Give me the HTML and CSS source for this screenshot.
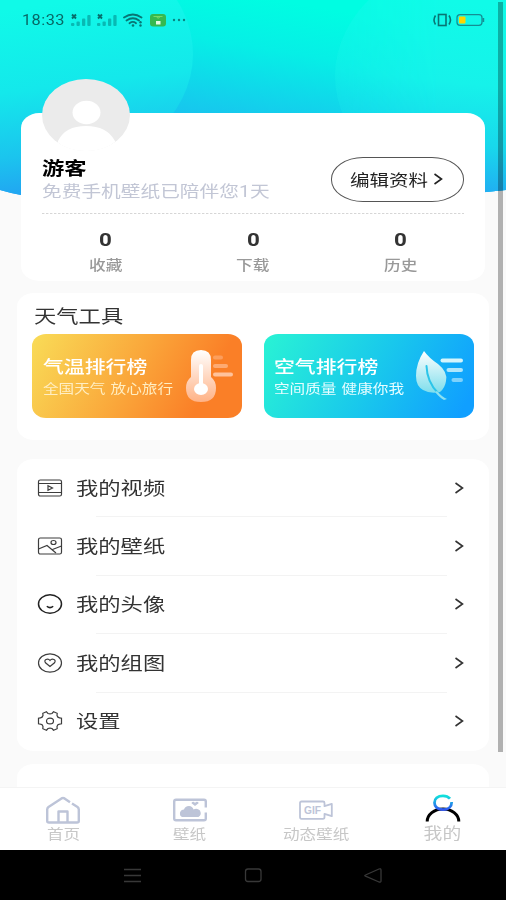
FILE: index.html
```html
<!DOCTYPE html>
<html lang="zh-CN">
<head>
<meta charset="utf-8">
<title>我的</title>
<link rel="stylesheet" href="styles.css">
</head>
<body>
<div class="phone">
  <svg class="sky" viewBox="0 0 506 200" width="506" height="200">
    <defs>
      <linearGradient id="base" gradientUnits="userSpaceOnUse" x1="275" y1="0" x2="243" y2="196">
        <stop offset="0" stop-color="#00fde2"/><stop offset=".25" stop-color="#06efe6"/><stop offset=".6" stop-color="#16c9ed"/><stop offset="1" stop-color="#23a2f4"/>
      </linearGradient>
      <linearGradient id="bubble" gradientUnits="userSpaceOnUse" x1="80" y1="0" x2="104" y2="196">
        <stop offset="0" stop-color="#10fae8"/><stop offset=".42" stop-color="#14e8eb"/><stop offset=".75" stop-color="#1bc4ee"/><stop offset="1" stop-color="#239cf3"/>
      </linearGradient>
      <linearGradient id="bubble2" gradientUnits="userSpaceOnUse" x1="440" y1="0" x2="420" y2="200">
        <stop offset="0" stop-color="#10fbe8"/><stop offset=".4" stop-color="#16f2ea"/><stop offset=".7" stop-color="#18d8ec"/><stop offset="1" stop-color="#23a2f4"/>
      </linearGradient>
      <linearGradient id="edge" gradientUnits="userSpaceOnUse" x1="335" y1="0" x2="440" y2="0">
        <stop offset="0" stop-color="#fff" stop-opacity=".45"/><stop offset="1" stop-color="#fff"/>
      </linearGradient>
      <mask id="soft"><rect width="506" height="200" fill="url(#edge)"/></mask>
      <clipPath id="dome"><path d="M0 0H506V190Q253 216 485 194.500V200H21V195Q10 193 0 190Z"/></clipPath>
    </defs>
    <g clip-path="url(#dome)">
      <rect width="506" height="200" fill="url(#base)"/>
      <ellipse cx="50" cy="54" rx="143" ry="117" fill="url(#bubble)"/>
      <rect width="40" height="200" fill="url(#bubble)"/>
      <ellipse cx="476" cy="76" rx="141" ry="117" fill="url(#bubble2)" mask="url(#soft)"/>
      <rect x="470" width="36" height="200" fill="url(#bubble2)"/>
    </g>
  </svg>

  <header class="status">
    <span class="clock">18:33</span>
    <svg class="signals" width="120" height="16" viewBox="0 0 120 16">
      <g id="sig">
        <path d="M2 2.500l4 4M6 2.500l-4 4" stroke="#086d6b" stroke-width="1.900"/>
        <g fill="#08b9b3"><rect x="1" y="11" width="3.400" height="3" rx="1"/><rect x="6.500" y="9.500" width="3.300" height="4.500" rx="1"/><rect x="12" y="6.500" width="3.300" height="7.500" rx="1"/><rect x="17.300" y="3" width="3.300" height="11" rx="1"/></g>
      </g>
      <use href="#sig" x="26"/>
      <g fill="none" stroke="#087674" stroke-width="1.800" stroke-linecap="round">
        <path d="M54 5.500Q63 -.5 71.500 5.500M56.500 8.500Q63 4 69 8.500M59.500 11.200Q63 8.700 66 11.200"/>
      </g>
      <circle cx="63" cy="13.500" r="1.300" fill="#087674"/><g fill="#087674"><circle cx="70.500" cy="10.300" r="1.200"/><circle cx="70.500" cy="13.500" r="1.200"/></g>
      <rect x="80" y="2" width="16" height="12.500" rx="3" fill="#35b951"/>
      <path d="M83.500 4.500h9M86.500 4l1 2h1.500l1-2" stroke="#78da68" fill="none"/><rect x="86" y="9" width="4.500" height="3.500" fill="#e4fae5"/>
      <g fill="#088682"><circle cx="104" cy="8" r="1.200"/><circle cx="109" cy="8" r="1.200"/><circle cx="114" cy="8" r="1.200"/></g>
    </svg>
    <svg class="battery" width="54" height="16" viewBox="0 0 54 16">
      <g fill="none" stroke="#087573" stroke-width="1.600"><rect x="7.500" y="2.500" width="7.500" height="11"/><path d="M4.500 3.500q-3 4.500 0 9M18 3.500q3 4.500 0 9"/><rect x="26" y="2.700" width="25" height="10.600" rx="3" stroke="#158e94" stroke-width="1.300"/></g>
      <rect x="28" y="4.500" width="6.500" height="7" rx="1" fill="#ffd500"/><rect x="51.500" y="6" width="1.700" height="4" fill="#158e94"/>
    </svg>
  </header>

  <main class="content">
    <section class="card profile">
      <svg class="avatar" width="88" height="72" viewBox="0 0 88 72">
        <defs><clipPath id="face"><ellipse cx="44" cy="36" rx="44" ry="36"/></clipPath></defs>
        <g clip-path="url(#face)"><rect width="88" height="72" fill="#ebebeb"/><ellipse cx="44.500" cy="33.500" rx="14" ry="11.800" fill="#fff"/><path d="M16 62Q23 47 44 47T73 62V72H16Z" fill="#fff"/><path d="M0 65H88V72H0Z" fill="#fff"/></g>
      </svg>
      <div class="who">
        <div class="names">
          <h1 class="wide">游客</h1>
          <p class="wide">免费手机壁纸已陪伴您1天</p>
        </div>
        <a class="edit"><span class="wide">编辑资料</span><svg width="10" height="12" viewBox="0 0 10 12"><path d="M1.500 1L8.500 6 1.500 11" fill="none" stroke="#222" stroke-width="1.600"/></svg></a>
      </div>
      <svg class="dash" width="422" height="1"><path d="M0 .5H422" stroke="#d6d6d6" stroke-dasharray="2.400 1.600"/></svg>
      <div class="stats">
        <div><b>0</b><span>收藏</span></div>
        <div><b>0</b><span>下载</span></div>
        <div><b>0</b><span>历史</span></div>
      </div>
    </section>

    <section class="card tools">
      <h2 class="wide">天气工具</h2>
      <div class="banners">
        <div class="banner warm">
          <div><h3 class="wide">气温排行榜</h3><p class="wide">全国天气 放心旅行</p></div>
          <svg width="50" height="54" viewBox="0 0 50 54">
            <defs><linearGradient id="th" x1="0" y1="0" x2="0" y2="1"><stop offset="0" stop-color="#fff"/><stop offset="1" stop-color="#ffb286"/></linearGradient></defs>
            <path d="M6 11Q6 1 16 1T26 11V28Q31 32 31 39Q31 53 16 53T1 39Q1 32 6 28Z" fill="url(#th)"/>
            <path d="M16 17V39" stroke="#fff" stroke-width="4" stroke-linecap="round"/><ellipse cx="16" cy="40" rx="7" ry="6" fill="#fff"/>
            <g stroke="#ffc29b" stroke-width="4" stroke-linecap="round"><path d="M30 8.500h6" opacity=".45"/><path d="M30 17h11" opacity=".65"/><path d="M30 25.500h16"/></g>
          </svg>
        </div>
        <div class="banner cool">
          <div><h3 class="wide">空气排行榜</h3><p class="wide">空间质量 健康你我</p></div>
          <svg width="50" height="54" viewBox="0 0 50 54">
            <defs><linearGradient id="lf" x1="0" y1="0" x2="0" y2="1"><stop offset="0" stop-color="#fff"/><stop offset="1" stop-color="#7fdeec"/></linearGradient></defs>
            <path d="M9 1Q14 8 23 14Q33 22 31 31Q30 38 25 42Q15 44 8 40Q1 36 1 26Q1 13 9 1Z" fill="url(#lf)"/>
            <path d="M11.500 16Q12 32 23 43" stroke="#2cc5e9" stroke-width="2" fill="none" stroke-linecap="round"/>
            <path d="M22 41Q27 47 32 49L29 50Q25 48 20 42Z" fill="#8de1f1"/>
            <g stroke="#d5f5fc" stroke-width="4" stroke-linecap="round"><path d="M27.500 10.500h18.500"/><path d="M33.500 20h12.500" opacity=".8"/><path d="M38.500 30h7.500" opacity=".55"/></g>
          </svg>
        </div>
      </div>
    </section>

    <section class="card menu">
      <a class="row"><svg class="ico" viewBox="0 0 26 22"><rect x="1.500" y="3" width="23" height="16" rx="1.800"/><path d="M1.500 6.500h23M1.500 15.500h23M11 8.700v4.600l4.500-2.300z"/></svg><span class="wide">我的视频</span><svg class="go" viewBox="0 0 10 12"><path d="M1.500 1L8.500 6 1.500 11"/></svg></a>
      <a class="row"><svg class="ico" viewBox="0 0 26 22"><rect x="1.500" y="3" width="23" height="16" rx="1.800"/><path d="M1.500 14L10 10.500 19 18M15.500 14.500L24.500 11"/><ellipse cx="16.500" cy="7.500" rx="2.500" ry="2"/></svg><span class="wide">我的壁纸</span><svg class="go" viewBox="0 0 10 12"><path d="M1.500 1L8.500 6 1.500 11"/></svg></a>
      <a class="row"><svg class="ico bold" viewBox="0 0 26 22"><ellipse cx="13" cy="11" rx="11.500" ry="9.200"/><path d="M9.800 13.300Q13 16 16.200 13.300"/></svg><span class="wide">我的头像</span><svg class="go" viewBox="0 0 10 12"><path d="M1.500 1L8.500 6 1.500 11"/></svg></a>
      <a class="row"><svg class="ico" viewBox="0 0 26 22"><ellipse cx="13" cy="11" rx="11.500" ry="9.200"/><path d="M13 14.500L8.500 10.800Q7 8.500 9 7.500Q11.500 6.300 13 8.500Q14.500 6.300 17 7.500Q19 8.500 17.500 10.800Z"/></svg><span class="wide">我的组图</span><svg class="go" viewBox="0 0 10 12"><path d="M1.500 1L8.500 6 1.500 11"/></svg></a>
      <a class="row"><svg class="ico" viewBox="0 0 26 22"><path d="M9.500 1.800L11 3.500Q13 4.300 15 3.500L16.500 1.800L20.200 3.300L20 5.500Q20.500 7.500 22.500 7.800L24.500 8.200V13.800L22.500 14.200Q20.500 14.500 20 16.500L20.200 18.700L16.500 20.200L15 18.500Q13 17.700 11 18.500L9.500 20.200L5.800 18.700L6 16.500Q5.500 14.500 3.500 14.200L1.500 13.800V8.200L3.500 7.800Q5.500 7.500 6 5.500L5.800 3.300Z"/><ellipse cx="13" cy="11" rx="3.500" ry="2.900"/></svg><span class="wide">设置</span><svg class="go" viewBox="0 0 10 12"><path d="M1.500 1L8.500 6 1.500 11"/></svg></a>
    </section>
    <section class="card more"></section>
  </main>

  <nav class="tabs">
    <a><svg width="36" height="30" viewBox="0 0 36 30"><g fill="none" stroke="#bdc4d8" stroke-width="2.400" stroke-linejoin="round"><path d="M25 6.200L19.500 2.400Q18 1.500 16.500 2.400L3.500 11Q2.200 12 2.200 13.500V25Q2.200 26.500 4 26.500H32Q33.800 26.500 33.800 25V13.500Q33.800 12 32.500 11L27 7.500"/><path d="M13.500 26V15.500H22.500V26"/></g></svg><span>首页</span></a>
    <a><svg width="36" height="30" viewBox="0 0 36 30"><path d="M33.800 11.500V5.500Q33.800 3.800 32 3.800H4Q2.200 3.800 2.200 5.500V22.500Q2.200 24.300 4 24.300H32Q33.800 24.300 33.800 22.500V16.500" fill="none" stroke="#bdc4d8" stroke-width="2.400"/><path d="M10 21Q7.500 20 8 16.500Q9 13.500 12 13.500Q13 10 17 10Q20.500 10 21.500 13.500Q25 11.500 28 14.500Q30 19 26.500 21ZM23 10L19.500 7.300Q19.500 5.500 21.500 5.700L23 6.700L24.700 5.700Q26.800 5.500 26.600 7.300Z" fill="#bdc4d8"/></svg><span>壁纸</span></a>
    <a><svg width="36" height="30" viewBox="0 0 36 30"><path d="M3.500 5.500H25Q26.500 5.500 26.500 7V10.200L33.800 7.800V20.200L26.500 17.800V21Q26.500 22.800 25 22.800H3.500Q2 22.800 2 21V7Q2 5.500 3.500 5.500Z" fill="none" stroke="#bdc4d8" stroke-width="1.800" stroke-linejoin="round"/><text x="6" y="17.500" textLength="17" lengthAdjust="spacingAndGlyphs" class="gif">GIF</text></svg><span>动态壁纸</span></a>
    <a class="on"><svg width="36" height="30" viewBox="0 0 36 30"><defs><linearGradient id="me" x1="0" y1="0" x2="0" y2="1"><stop offset="0" stop-color="#10e2db"/><stop offset="1" stop-color="#3157f0"/></linearGradient></defs><path d="M2.200 27.500A15.800 12.500 0 0 1 33.800 27.500" fill="none" stroke="#000" stroke-width="3"/><path d="M25 4.700Q22.500 1.800 18 1.800C12.500 1.800 9.500 5 9.500 8.700S12.500 15.700 18 15.700S26.700 12.500 26.700 8" fill="none" stroke="url(#me)" stroke-width="2.800"/></svg><span>我的</span></a>
  </nav>

  <footer class="system">
    <svg width="506" height="50" viewBox="0 0 506 50" fill="none" stroke="#383838" stroke-width="1.300"><path d="M124 19.500h17M124 25.500h17M124 31.500h17"/><rect x="245.500" y="19" width="15.500" height="12.500" rx="2.500"/><path d="M379 19L365.500 25Q364 25.500 365.500 26.200L379 32Q381 32.500 381 31V20Q381 18.300 379 19Z"/></svg>
  </footer>
  <div class="scrollbar"></div>
</div>
</body>
</html>
```
FILE: styles.css
```css
* { box-sizing: border-box; margin: 0; padding: 0; }
body { width: 506px; height: 900px; overflow: hidden; background: #fafafa; font-family: Roboto, "Noto Sans CJK SC", sans-serif; color: #333; }
svg { display: block; flex: none; }
.phone { position: relative; display: flex; flex-direction: column; width: 506px; height: 900px; overflow: hidden; }
.sky { position: absolute; left: 0; top: 0; }
/* Lettering is expanded horizontally throughout the interface. */
.wide { display: inline-block; white-space: nowrap; transform: scaleX(1.22); transform-origin: left center; }

.status { position: relative; display: flex; align-items: center; height: 40px; padding: 0 21px 0 22px; }
.clock { width: 48px; font-size: 14.3px; letter-spacing: .4px; color: #086865; transform: scaleX(1.14); transform-origin: left; }
.battery { margin-left: auto; }

.content { position: relative; height: 747px; overflow: visible; flex: none; }
.card { background: #fff; border-radius: 17px / 14px; margin: 0 17px; }

.profile { position: relative; height: 168px; margin: 73px 21px 0; padding: 44px 21px 0; border-radius: 18px / 15px; }
.avatar { position: absolute; left: 21px; top: -34px; }
.who { display: flex; justify-content: space-between; width: 422px; height: 56px; }
.names h1 { display: block; font-size: 18.3px; line-height: 24px; font-weight: 700; color: #000; }
.names p { display: block; font-size: 16.15px; line-height: 22px; color: #c2c6d5; }
.edit { display: flex; justify-content: space-between; align-items: center; width: 133px; height: 45px; padding: 0 20px 0 18px; border: 1px solid #555; border-radius: 32px / 22px; font-size: 16px; color: #222; }
.edit .wide { margin-top: -2px; }
.edit svg { margin-top: -1px; }
.stats { display: flex; width: 442px; margin-left: -10px; padding-top: 12px; }
.stats div { flex: 1; display: flex; flex-direction: column; align-items: center; }
.stats b { font-size: 19px; line-height: 27px; transform: scaleX(1.18); }
.stats span { font-size: 13.7px; line-height: 25px; font-weight: 500; color: #999; transform: scaleX(1.22); }

.tools { height: 147px; margin-top: 12px; padding: 9px 15px 0; }
.tools h2 { display: block; margin-left: 2px; height: 32px; font-size: 18.3px; line-height: 29px; font-weight: 400; }
.banners { display: flex; gap: 22px; }
.banner { display: flex; justify-content: space-between; width: 210px; height: 84px; padding: 15px 7px 0 11px; border-radius: 14px / 12px; color: #fff; }
.warm { background: linear-gradient(118deg, #f9dc57 0%, #faa63a 48%, #fa7f27 80%); }
.cool { padding-left: 10px; background: linear-gradient(118deg, #28f0d6 4%, #19c8ec 52%, #109fff 94%); }
.cool svg { margin: 1px 2px 0 0; }
.banner h3 { display: block; height: 26px; font-size: 17.1px; line-height: 37px; font-weight: 500; }
.banner p { display: block; font-size: 12.8px; line-height: 27px; color: #ffeec3; word-spacing: 1px; }
.cool p { color: #e6fdff; }

.menu { height: 292px; margin-top: 19px; }
.row { position: relative; display: flex; align-items: center; height: 58.4px; padding: 0 25.5px 1px 20px; }
.row:not(:last-child)::after { content: ""; position: absolute; left: 79px; right: 42px; bottom: 0; height: 1px; background: #f3f3f3; }
.row .wide { margin: 2px 0 0 13px; font-size: 18.3px; line-height: 28px; }
.ico { width: 26px; height: 22px; fill: none; stroke: #3d3d3d; stroke-width: 1.2; }
.ico.bold { stroke: #222; stroke-width: 1.5; }
.go { width: 10px; height: 12px; margin-left: auto; fill: none; stroke: #333; stroke-width: 1.6; }
.more { height: 40px; margin-top: 13px; }

.tabs { position: relative; display: flex; flex: none; height: 63px; background: #fff; border-top: 1px solid #f4f4f4; }
.tabs a { flex: 1; display: flex; flex-direction: column; align-items: center; padding-top: 8px; }
.tabs span { font-size: 13.6px; line-height: 17px; color: #c7c7c7; white-space: nowrap; transform: scaleX(1.22); }
.tabs .on svg { margin-top: -2px; }
.tabs .on span { margin-top: 2px; font-size: 15.4px; }
.gif { font: 700 10px "Liberation Sans", sans-serif; fill: #bdc4d8; }
.system { position: relative; flex: none; height: 50px; background: #000; }
.scrollbar { position: absolute; left: 498px; top: 2px; width: 5px; height: 750px; background: rgba(0,0,0,.29); }
```
